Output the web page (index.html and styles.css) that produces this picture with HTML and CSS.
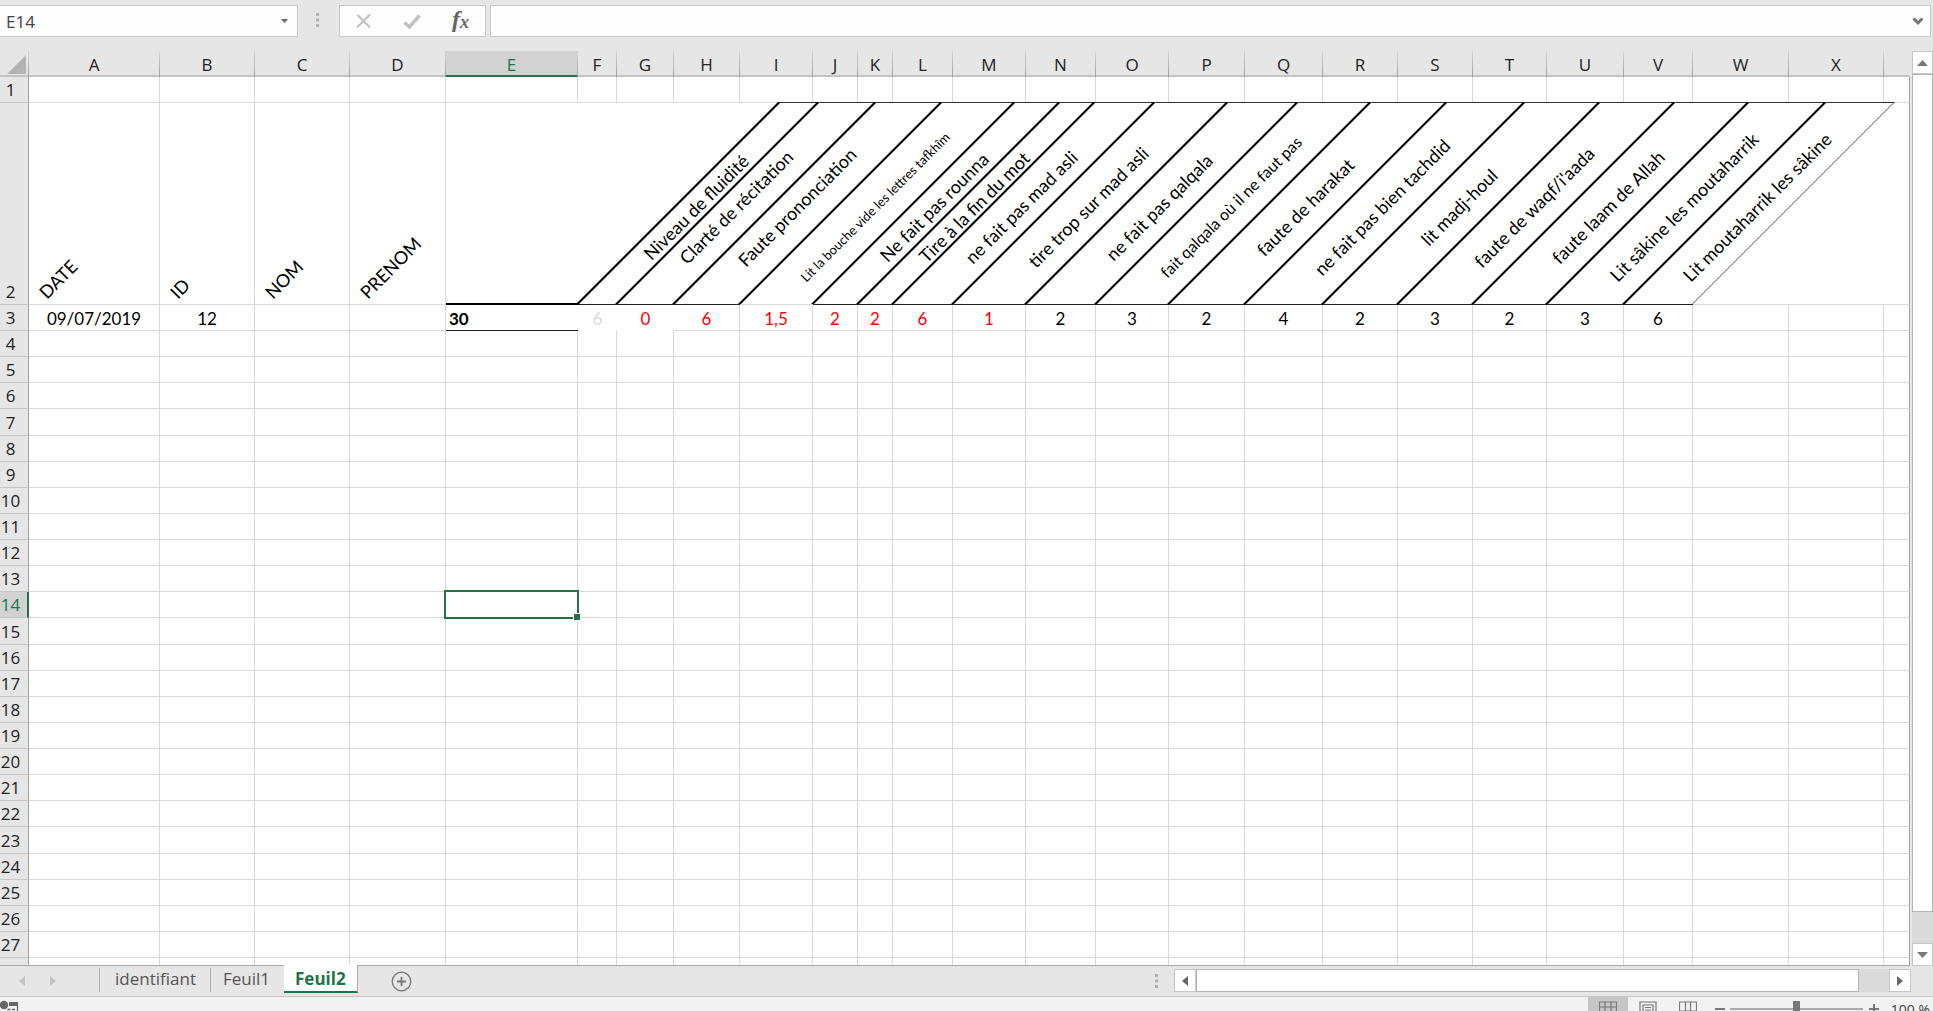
FILE: index.html
```html
<!DOCTYPE html>
<html lang="fr">
<head>
<meta charset="utf-8">
<title>Feuil2</title>
<link rel="stylesheet" href="styles.css">
</head>
<body>
<div class="app">
  <header class="formula-bar">
    <div class="name-box">
      <input class="name-input" type="text" value="E14" aria-label="Zone Nom">
      <button class="plain" aria-label="Liste des noms"><svg width="7" height="4" viewBox="0 0 7 4"><path d="M0 0h7L3.500 4z" fill="#666"/></svg></button>
    </div>
    <svg class="grip" width="4" height="14" viewBox="0 0 4 14"><path d="M0 0h3v3H0zM0 5.500h3v3H0zM0 11h3v3H0z" fill="#b0b0b0"/></svg>
    <div class="formula-actions">
      <button class="plain" aria-label="Annuler"><svg width="16" height="16" viewBox="0 0 16 16"><path d="M1.500 2L14 14.500M14 1.500L1 14.500" stroke="#c3c3c3" stroke-width="2.200" fill="none"/></svg></button>
      <button class="plain" aria-label="Entrer"><svg width="18" height="15" viewBox="0 0 18 15"><path d="M1.500 8.500l5 4.500L16.500 1.500" stroke="#c3c3c3" stroke-width="3.600" fill="none"/></svg></button>
      <button class="plain fx" aria-label="Insérer une fonction">f<span>x</span></button>
    </div>
    <div class="formula-box">
      <input class="formula-input" type="text" aria-label="Barre de formule">
      <button class="plain" aria-label="Développer"><svg width="12" height="9" viewBox="0 0 12 9"><path d="M1.500 1.500L6 6l4.500-4.500" stroke="#777" stroke-width="3" fill="none"/></svg></button>
    </div>
  </header>

  <main class="workspace">
    <div class="sheet">
      <table class="grid">
        <colgroup>
          <col class="w29"><col class="w131"><col class="w95"><col class="w95"><col class="w96"><col class="w132"><col class="w39"><col class="w57"><col class="w66"><col class="w73"><col class="w45"><col class="w35"><col class="w60"><col class="w73"><col class="w70"><col class="w73"><col class="w76"><col class="w78"><col class="w75"><col class="w75"><col class="w74"><col class="w77"><col class="w69"><col class="w96"><col class="w95"><col>
        </colgroup>
        <thead>
          <tr><th class="corner"><svg width="19" height="19" viewBox="0 0 19 19"><path d="M19 0v19H0z" fill="#b4b4b4"/></svg></th><th>A</th><th>B</th><th>C</th><th>D</th><th class="current">E</th><th>F</th><th>G</th><th>H</th><th>I</th><th>J</th><th>K</th><th>L</th><th>M</th><th>N</th><th>O</th><th>P</th><th>Q</th><th>R</th><th>S</th><th>T</th><th>U</th><th>V</th><th>W</th><th>X</th><th class="last"></th></tr>
        </thead>
        <tbody id="rows">
          <tr><th>1</th><td></td><td></td><td></td><td></td><td></td><td></td><td></td><td></td><td></td><td></td><td></td><td></td><td></td><td></td><td></td><td></td><td></td><td></td><td></td><td></td><td></td><td></td><td></td><td></td><td></td></tr>
          <tr class="titles">
            <th>2</th>
            <td><span class="tilt">DATE</span></td>
            <td><span class="tilt">ID</span></td>
            <td><span class="tilt">NOM</span></td>
            <td><span class="tilt">PRENOM</span></td>
            <td class="open thick"></td>
            <td class="open ruled"><div class="slant"></div><span class="label">Niveau de fluidité</span></td>
            <td class="open ruled"><div class="slant"></div><span class="label near">Clarté de récitation</span></td>
            <td class="open ruled"><div class="slant"></div><span class="label near">Faute prononciation</span></td>
            <td class="open"><div class="slant"></div><span class="label small">Lit la bouche vide les lettres tafkhîm</span></td>
            <td class="open ruled"><div class="slant"></div><span class="label">Ne fait pas rounna</span></td>
            <td class="open ruled"><div class="slant"></div><span class="label">Tire à la fin du mot</span></td>
            <td class="open ruled"><div class="slant"></div><span class="label">ne fait pas mad asli</span></td>
            <td class="open ruled"><div class="slant"></div><span class="label">tire trop sur mad asli</span></td>
            <td class="open ruled"><div class="slant"></div><span class="label">ne fait pas qalqala</span></td>
            <td class="open ruled"><div class="slant"></div><span class="label medium">fait qalqala où il ne faut pas</span></td>
            <td class="open ruled"><div class="slant"></div><span class="label">faute de harakat</span></td>
            <td class="open ruled"><div class="slant"></div><span class="label">ne fait pas bien tachdid</span></td>
            <td class="open ruled"><div class="slant"></div><span class="label">lit madj-houl</span></td>
            <td class="open ruled"><div class="slant"></div><span class="label">faute de waqf/i'aada</span></td>
            <td class="open ruled"><div class="slant"></div><span class="label">faute laam de Allah</span></td>
            <td class="open ruled"><div class="slant"></div><span class="label">Lit sâkine les moutaharrik</span></td>
            <td class="open ruled"><div class="slant end"></div><span class="label">Lit moutaharrik les sâkine</span></td>
            <td class="open"></td><td class="open"></td><td class="open"></td>
          </tr>
          <tr class="values">
            <th>3</th><td>09/07/2019</td><td>12</td><td></td><td></td><td class="total open ruled">30</td>
            <td class="faint open blank">6</td><td class="red open blank">0</td><td class="red">6</td><td class="red">1,5</td><td class="red">2</td><td class="red">2</td><td class="red">6</td><td class="red">1</td>
            <td>2</td><td>3</td><td>2</td><td>4</td><td>2</td><td>3</td><td>2</td><td>3</td><td>6</td><td></td><td></td><td></td>
          </tr>
        </tbody>
      </table>
    </div>
    <div class="vscroll">
      <button class="scroll-button" aria-label="Haut"><svg width="11" height="6" viewBox="0 0 11 6"><path d="M0 6h11L5.500 0z" fill="#777"/></svg></button>
      <div class="vthumb"></div>
      <div class="vtrack"></div>
      <button class="scroll-button" aria-label="Bas"><svg width="11" height="6" viewBox="0 0 11 6"><path d="M0 0h11L5.500 6z" fill="#777"/></svg></button>
    </div>
  </main>

  <nav class="tab-bar">
    <div class="tab-nav">
      <button class="plain" aria-label="Précédente"><svg width="6" height="10" viewBox="0 0 6 10"><path d="M6 0v10L0 5z" fill="#c3c3c3"/></svg></button>
      <button class="plain" aria-label="Suivante"><svg width="6" height="10" viewBox="0 0 6 10"><path d="M0 0v10l6-5z" fill="#c3c3c3"/></svg></button>
    </div>
    <button class="tab first">identifiant</button>
    <button class="tab">Feuil1</button>
    <button class="tab active">Feuil2</button>
    <button class="plain add" aria-label="Nouvelle feuille"><svg width="21" height="21" viewBox="0 0 21 21"><circle cx="10.500" cy="10.500" r="9.300" fill="none" stroke="#777" stroke-width="1.300"/><path d="M10.500 6v9M6 10.500h9" stroke="#777" stroke-width="1.800"/></svg></button>
    <svg class="tab-grip" width="4" height="14" viewBox="0 0 4 14"><path d="M0 0h3v3H0zM0 5.500h3v3H0zM0 11h3v3H0z" fill="#b0b0b0"/></svg>
    <div class="hscroll">
      <button class="scroll-button" aria-label="Gauche"><svg width="6" height="10" viewBox="0 0 6 10"><path d="M6 0v10L0 5z" fill="#666"/></svg></button>
      <div class="hthumb"></div>
      <div class="htrack"></div>
      <button class="scroll-button" aria-label="Droite"><svg width="6" height="10" viewBox="0 0 6 10"><path d="M0 0v10l6-5z" fill="#666"/></svg></button>
    </div>
  </nav>

  <footer class="status-bar">
    <div class="status-inner">
      <svg class="macro" width="19" height="18" viewBox="0 0 19 18"><circle cx="4" cy="5" r="4.200" fill="#666"/><path d="M10 3h7.500v14H3v-6" fill="none" stroke="#666" stroke-width="1.200"/><path d="M9 2h9v4H9z" fill="#666"/><path d="M7.500 9.500h3M12 9.500h3M7.500 13h3M12 13h3" stroke="#666" stroke-width="1.500"/></svg>
      <button class="view selected" aria-label="Normal"><svg width="18" height="16" viewBox="0 0 18 16"><path d="M.5 1h17v14H.5zM6 1v14M12 1v14M.5 6h17M.5 11h17" fill="none" stroke="#777" stroke-width="1.200"/></svg></button>
      <button class="view" aria-label="Mise en page"><svg width="18" height="16" viewBox="0 0 18 16"><path d="M1 1h16v14H1zM4 4h10v9H4zM6 6.500h6M6 9h6" fill="none" stroke="#777" stroke-width="1.200"/></svg></button>
      <button class="view" aria-label="Sauts de page"><svg width="18" height="16" viewBox="0 0 18 16"><path d="M.5 1h17v14H.5zM6.500 1v9M11.500 1v9M.5 10h17" fill="none" stroke="#777" stroke-width="1.200"/></svg></button>
      <button class="plain" aria-label="Zoom arrière"><svg width="10" height="10" viewBox="0 0 10 10"><path d="M0 5h10" stroke="#777" stroke-width="2"/></svg></button>
      <input class="zoom" type="range" min="0" max="100" value="50" aria-label="Zoom">
      <button class="plain" aria-label="Zoom avant"><svg width="12" height="10" viewBox="0 0 12 10"><path d="M1 5h10M6 0v10" stroke="#777" stroke-width="2"/></svg></button>
      <span class="percent">100 %</span>
    </div>
  </footer>
</div>
<script src="sheet.js"></script>
</body>
</html>
```
FILE: sheet.js
```js
// Fills the sheet with its empty rows and marks the active cell.
const body = document.getElementById('rows');
for (let n = 4; n <= 28; n++) {
  const row = body.insertRow();
  const head = document.createElement('th');
  head.textContent = n;
  row.append(head);
  for (let c = 1; c <= 25; c++) row.insertCell();
  if (n % 8 === 7) row.className = 'tall';
  if (n === 14) {
    head.className = 'current';
    row.cells[5].innerHTML = '<div class="cursor"></div>';
  }
}
```
FILE: styles.css
```css
* { box-sizing: border-box; }
body { margin: 0; overflow: hidden; font-family: "Open Sans", "Noto Sans", sans-serif; font-size: 17px; color: #444; }
button, input { font: inherit; color: inherit; padding: 0; margin: 0; border: 0; background: none; outline: 0; }
svg { display: block; }
.plain { display: flex; align-items: center; justify-content: center; }

.app { height: 100vh; display: flex; flex-direction: column; background: #e6e6e6; overflow: hidden; }

.formula-bar { display: flex; align-items: stretch; height: 51px; padding: 5px 2px 14px 0; }
.name-box, .formula-actions, .formula-box { display: flex; align-items: center; background: #fdfdfd; border: 1px solid #c8c8c8; }
.name-box { width: 298px; border-left: 0; padding: 0 9px 0 6px; }
.name-input { flex: 1; min-width: 0; }
.grip { margin: 8px 19px 0 18px; }
.formula-actions { width: 147px; justify-content: space-between; padding: 0 16px; margin-right: 4px; }
.fx { font: italic bold 24px "Liberation Serif", serif; color: #666; line-height: 28px; padding-bottom: 4px; }
.fx span { font-size: 18px; padding-top: 6px; }
.formula-box { flex: 1; padding-right: 6px; }
.formula-input { flex: 1; min-width: 0; }

.workspace { flex: 1; min-height: 0; display: flex; gap: 2px; }
.sheet { flex: 1; min-width: 0; overflow: hidden; border-bottom: 1px solid #ababab; }

.grid { width: 100%; table-layout: fixed; border-collapse: separate; border-spacing: 0; }
.w29 { width: 29px; } .w35 { width: 35px; } .w39 { width: 39px; } .w45 { width: 45px; } .w57 { width: 57px; }
.w60 { width: 60px; } .w66 { width: 66px; } .w69 { width: 69px; } .w70 { width: 70px; } .w73 { width: 73px; }
.w74 { width: 74px; } .w75 { width: 75px; } .w76 { width: 76px; } .w77 { width: 77px; } .w78 { width: 78px; }
.w95 { width: 95px; } .w96 { width: 96px; } .w131 { width: 131px; } .w132 { width: 132px; }

.grid th { font-weight: 400; color: #222; padding: 0; }
.grid thead th { height: 26px; line-height: 21px; padding-top: 3px; border-bottom: 2px solid #c3c3c3; border-right: 1px solid; border-image: linear-gradient(#d8d8d8, #9f9f9f) 1; border-image-width: 0 1px 0 0; background: linear-gradient(#c3c3c3, #c3c3c3) bottom / 100% 2px no-repeat border-box; }
.grid thead .current { color: #217346; background: linear-gradient(#217346, #217346) bottom / 100% 2px no-repeat border-box, #d2d2d2; }
.grid thead .last { border-image: none; border-right-color: #e6e6e6; }
.corner svg { margin-left: 7px; }

.grid tbody th { height: 26px; line-height: 25px; padding-right: 7px; vertical-align: bottom; border-right: 1px solid #9f9f9f; border-bottom: 1px solid #c6c6c6; background: #e6e6e6; text-align: center; }
.grid tbody .current { color: #217346; background: #d2d2d2; border-right: 2px solid #217346; padding-right: 6px; }
.grid td { padding: 0; height: 26px; line-height: 25px; background: #fff; border-right: 1px solid #d9d9d9; border-bottom: 1px solid #d9d9d9; position: relative; font-family: Lato, sans-serif; font-size: 17px; color: #000; text-align: center; }
.grid td:last-child { border-right-color: #9f9f9f; }
.grid .tall th, .grid .tall td { height: 27px; }
.grid .values td { padding-top: 2px; line-height: 23px; }

.titles { background: #fff; }
.grid .titles td { height: 202px; background: none; }
.grid .titles th { height: 202px; }
.grid .open:not(:last-child) { border-right: 0; }
.grid .ruled { border-bottom-color: #222; }
.grid .thick { border-bottom: 2px solid #000; }
.grid .blank { border-bottom-color: #fff; }
.grid .red { color: #f00; }
.grid .faint { color: #d9d9d9; }
.grid .total { text-align: left; padding-left: 3px; font-weight: 700; }

.tilt, .label { position: absolute; font-size: 18px; line-height: 20px; white-space: nowrap; }
.tilt { left: 20px; bottom: 2px; transform: rotate(-45deg); transform-origin: 0 100%; }
.slant { position: absolute; inset: -1px 0 0 -2px; border-left: 3px solid #000; border-top: 1px solid #333; transform: skewX(-45deg); transform-origin: 0 100%; }
.slant.end { border-right: 1px solid #555; }
.label { z-index: 1; left: calc(50% + 98px); top: 104px; transform: translate(-50%, -50%) rotate(-45deg); }
.label.near { left: calc(50% + 90px); }
.label.small { font-size: 13px; }
.label.medium { font-size: 16px; }

.cursor { position: absolute; z-index: 2; inset: -2px; border: 2px solid #217346; }
.cursor::after { content: ""; position: absolute; right: -3px; bottom: -3px; width: 6px; height: 6px; background: #217346; outline: 1px solid #fff; }

.scroll-button { flex: none; display: flex; align-items: center; justify-content: center; background: #fff; border: 1px solid #c6c6c6; width: 22px; height: 23px; }
.vscroll { width: 21px; display: flex; flex-direction: column; }
.vscroll .scroll-button { width: 21px; }
.vthumb { flex: 1; background: #fff; border: 1px solid #b4b4b4; }
.vtrack { height: 31px; background: #dadada; }

.tab-bar { display: flex; height: 31px; flex: none; align-items: flex-start; padding-right: 22px; border-bottom: 1px solid #c6c6c6; }
.tab-nav { display: flex; gap: 25px; width: 99px; padding-left: 19px; height: 30px; }
.tab { height: 24px; line-height: 22px; margin-top: 2px; padding: 0 14px 2px 12px; border-right: 1px solid #ababab; color: #555; }
.tab.first { border-left: 1px solid #ababab; padding-left: 15px; }
.tab.active { height: 28px; margin: -1px 0 0 0; padding: 2px 11px 0; background: #fff; border-bottom: 2px solid #217346; color: #217346; font-weight: 700; }
.tab:nth-of-type(2) { border-right: 0; }
.add { margin: 5px auto 0 33px; }
.tab-grip { margin: 8px 15px 0 0; }
.hscroll { display: flex; width: 737px; height: 23px; margin-top: 3px; }
.hthumb { flex: 1; background: #fff; border: 1px solid #b4b4b4; }
.htrack { width: 30px; background: #dadada; }

.status-bar { height: 14px; flex: none; overflow: hidden; background: #f2f2f2; }
.status-inner { display: flex; align-items: center; height: 24px; padding-right: 3px; }
.macro { margin-right: auto; }
.view { width: 40px; height: 24px; display: flex; align-items: center; justify-content: center; }
.view.selected { background: #c6c6c6; }
.view + .plain { margin-left: 7px; }
.zoom { appearance: none; width: 133px; height: 16px; margin: 0 5px; background: linear-gradient(#ababab, #ababab) center / 100% 2px no-repeat; }
.zoom::-webkit-slider-thumb { appearance: none; width: 7px; height: 16px; background: #777; }
.percent { font-size: 14px; margin-left: 11px; }
```
